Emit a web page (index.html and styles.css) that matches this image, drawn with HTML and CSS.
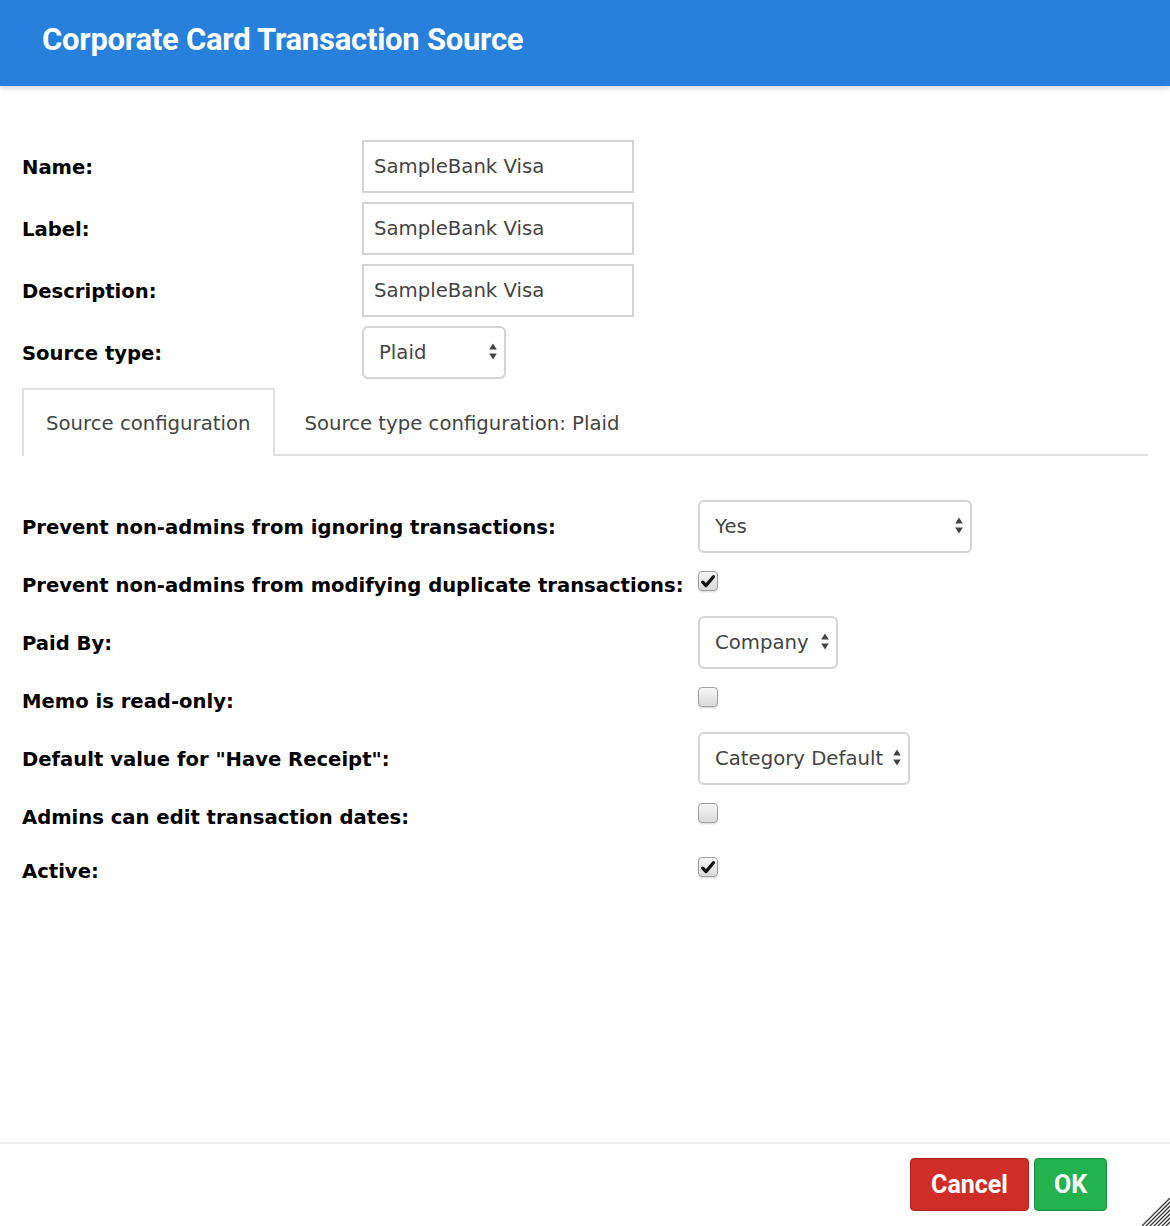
FILE: index.html
```html
<!DOCTYPE html>
<html>
<head>
<meta charset="utf-8">
<link rel="stylesheet" href="styles.css">
</head>
<body>
<div class="dialog">
  <header class="titlebar"><h1 class="title">Corporate Card Transaction Source</h1></header>
  <main class="content">
    <div class="form-top">
      <div class="row"><span class="lbl">Name:</span><input class="txt" type="text" value="SampleBank Visa"></div>
      <div class="row"><span class="lbl">Label:</span><input class="txt" type="text" value="SampleBank Visa"></div>
      <div class="row"><span class="lbl">Description:</span><input class="txt" type="text" value="SampleBank Visa"></div>
      <div class="row"><span class="lbl">Source type:</span>
        <div class="sel w-plaid"><span class="sel-text">Plaid</span>
          <svg class="arrows" width="8" height="17" viewBox="0 0 8 17"><path d="M4 0.5L7.8 6.5H0.2Z M4 16.5L7.8 10.5H0.2Z" fill="#444"/></svg>
        </div>
      </div>
    </div>

    <div class="tabs">
      <div class="tab active">Source configuration</div>
      <div class="tab">Source type configuration: Plaid</div>
    </div>

    <div class="settings">
      <div class="srow selrow"><span class="slbl">Prevent non-admins from ignoring transactions:</span>
        <div class="sel w-yes"><span class="sel-text">Yes</span>
          <svg class="arrows" width="8" height="17" viewBox="0 0 8 17"><path d="M4 0.5L7.8 6.5H0.2Z M4 16.5L7.8 10.5H0.2Z" fill="#444"/></svg>
        </div>
      </div>
      <div class="srow cbrow"><span class="slbl">Prevent non-admins from modifying duplicate transactions:</span>
        <span class="cb"><svg width="14" height="13" viewBox="0 0 14 13"><path d="M1.8 7.2L5 10.6L12.4 1.8" fill="none" stroke="#111" stroke-width="3.2" stroke-linecap="round" stroke-linejoin="round"/></svg></span>
      </div>
      <div class="srow selrow"><span class="slbl">Paid By:</span>
        <div class="sel w-company"><span class="sel-text">Company</span>
          <svg class="arrows" width="8" height="17" viewBox="0 0 8 17"><path d="M4 0.5L7.8 6.5H0.2Z M4 16.5L7.8 10.5H0.2Z" fill="#444"/></svg>
        </div>
      </div>
      <div class="srow cbrow"><span class="slbl">Memo is read-only:</span>
        <span class="cb"></span>
      </div>
      <div class="srow selrow"><span class="slbl">Default value for "Have Receipt":</span>
        <div class="sel w-category"><span class="sel-text">Category Default</span>
          <svg class="arrows" width="8" height="17" viewBox="0 0 8 17"><path d="M4 0.5L7.8 6.5H0.2Z M4 16.5L7.8 10.5H0.2Z" fill="#444"/></svg>
        </div>
      </div>
      <div class="srow cbrow"><span class="slbl">Admins can edit transaction dates:</span>
        <span class="cb"></span>
      </div>
      <div class="srow cbrow"><span class="slbl">Active:</span>
        <span class="cb"><svg width="14" height="13" viewBox="0 0 14 13"><path d="M1.8 7.2L5 10.6L12.4 1.8" fill="none" stroke="#111" stroke-width="3.2" stroke-linecap="round" stroke-linejoin="round"/></svg></span>
      </div>
    </div>
  </main>
  <footer class="footer">
    <button class="btn cancel">Cancel</button>
    <button class="btn ok">OK</button>
    <svg class="grip" width="30" height="30" viewBox="0 0 30 30">
      <g stroke="#3a3a3a" stroke-width="1.3">
        <line x1="30" y1="2" x2="2" y2="30"/>
        <line x1="30" y1="6" x2="6" y2="30"/>
        <line x1="30" y1="10" x2="10" y2="30"/>
        <line x1="30" y1="14" x2="14" y2="30"/>
        <line x1="30" y1="18" x2="18" y2="30"/>
        <line x1="30" y1="22" x2="22" y2="30"/>
        <line x1="30" y1="26" x2="26" y2="30"/>
      </g>
    </svg>
  </footer>
</div>
</body>
</html>
```
FILE: styles.css
```css
html, body {
  margin: 0;
  padding: 0;
  background: #fff;
}
.dialog {
  position: relative;
  width: 1170px;
  height: 1226px;
  display: flex;
  flex-direction: column;
  font-family: "DejaVu Sans", Verdana, sans-serif;
  overflow: hidden;
}
.titlebar {
  height: 86px;
  background: #2780db;
  box-shadow: 0 3px 6px rgba(0,0,0,0.14);
  display: flex;
  align-items: center;
  padding-left: 42px;
  flex: none;
  position: relative;
  z-index: 1;
}
.title {
  margin: 0;
  color: #fff;
  font-family: "Liberation Sans Narrow", "Roboto", sans-serif;
  font-weight: bold;
  font-size: 31px;
  letter-spacing: -0.25px;
  margin-top: -8px;
}
.content {
  flex: 1;
  padding: 54px 22px 0 22px;
}
.form-top {
  display: flex;
  flex-direction: column;
  gap: 9px;
}
.row {
  display: flex;
  align-items: center;
  height: 53px;
}
.lbl {
  width: 340px;
  font-weight: bold;
  font-size: 19.6px;
  color: #000;
  padding-top: 2px;
}
.txt {
  box-sizing: border-box;
  width: 272px;
  height: 53px;
  border: 2px solid #d3d3d3;
  border-radius: 0;
  padding: 0 10px;
  font-family: "DejaVu Sans", Verdana, sans-serif;
  font-size: 19.7px;
  color: #444;
  outline: none;
  margin: 0;
}
.sel {
  position: relative;
  box-sizing: border-box;
  height: 53px;
  border: 2px solid #d3d3d3;
  border-radius: 6px;
  display: flex;
  align-items: center;
  padding-left: 15px;
  font-size: 19.7px;
  color: #444;
  background: #fff;
}
.arrows {
  position: absolute;
  right: 7px;
  top: 15px;
}
.w-plaid { width: 144px; }
.w-yes { width: 274px; }
.w-company { width: 140px; }
.w-category { width: 212px; }
.tabs {
  display: flex;
  margin-top: 9px;
  border-bottom: 2px solid #e0e0e0;
  height: 66px;
}
.tab {
  font-size: 19.7px;
  color: #444;
  display: flex;
  align-items: center;
  padding: 1px 26px 0 27px;
  height: 68px;
  margin-bottom: -2px;
  box-sizing: border-box;
  border: 2px solid transparent;
  border-bottom: none;
}
.tab.active {
  border-color: #e0e0e0;
  background: #fff;
  padding: 1px 23px 0 22px;
}
.settings {
  margin-top: 44px;
  display: flex;
  flex-direction: column;
  gap: 9px;
}
.srow {
  display: flex;
}
.selrow {
  height: 53px;
  align-items: center;
}
.selrow .slbl {
  padding-top: 2px;
}
.cbrow {
  height: 45px;
  align-items: flex-start;
}
.slbl {
  width: 676px;
  flex: none;
  font-weight: bold;
  font-size: 19.6px;
  color: #000;
}
.cbrow .slbl {
  margin-top: 12px;
}
.cb {
  box-sizing: border-box;
  width: 20px;
  height: 20px;
  margin-top: 9px;
  border: 1px solid #a0a0a0;
  border-radius: 4px;
  background: linear-gradient(#f6f6f6, #dadada);
  box-shadow: 0 1px 2px rgba(0,0,0,0.18);
  display: flex;
  align-items: center;
  justify-content: center;
}
.footer {
  flex: none;
  height: 84px;
  border-top: 2px solid #eeeeee;
  display: flex;
  justify-content: flex-end;
  align-items: flex-start;
  gap: 5px;
  padding: 14px 63px 0 0;
  box-sizing: border-box;
  position: relative;
}
.btn {
  height: 53px;
  border-radius: 4px;
  color: #fff;
  font-family: "Liberation Sans Narrow", "Roboto", sans-serif;
  font-weight: bold;
  font-size: 25px;
  padding: 0;
  margin: 0;
  cursor: pointer;
}
.cancel {
  width: 119px;
  background: #cf2e28;
  border: 1px solid #a92520;
}
.ok {
  width: 73px;
  background: #22b34e;
  border: 1px solid #1b8f3d;
}
.grip {
  position: absolute;
  right: 0;
  bottom: 0;
}
```
